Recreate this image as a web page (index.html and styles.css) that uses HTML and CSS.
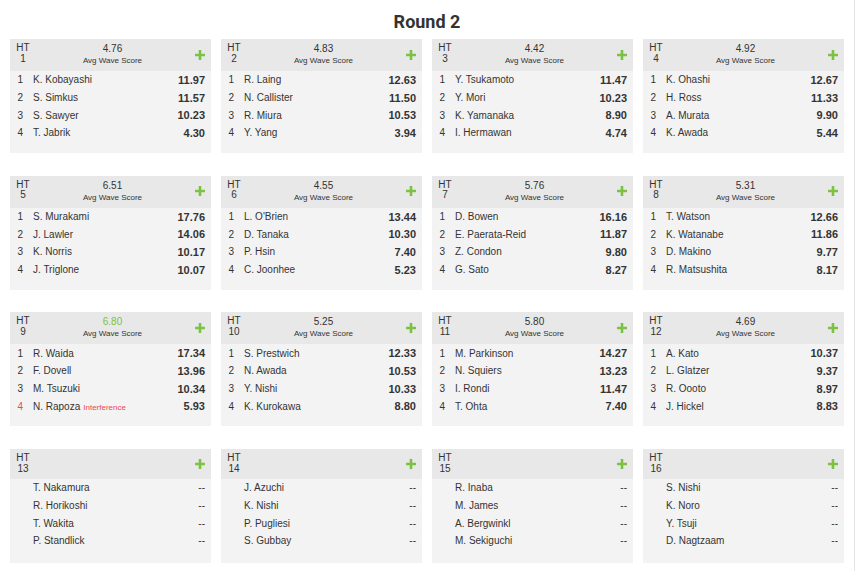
FILE: index.html
```html
<!DOCTYPE html>
<html>
<head>
<meta charset="utf-8">
<link rel="stylesheet" href="styles.css">
</head>
<body>
<div class="page">
  <h1 class="title">Round 2</h1>
  <div class="grid" id="grid"></div>
</div>
<script src="app.js"></script>
</body>
</html>
```

FILE: styles.css
```css
* { box-sizing: border-box; }
html, body { margin: 0; padding: 0; background: #fff; }
body { font-family: "Liberation Sans", Arial, sans-serif; color: #333; }
.page {
  width: 855px;
  height: 571px;
  border-right: 1px solid #e4e4e4;
}
.title {
  margin: 0 0 6px 0;
  padding-top: 11px;
  font-family: Roboto, "Liberation Sans", sans-serif;
  font-weight: 700;
  font-size: 18px;
  line-height: 22px;
  text-align: center;
  color: #333;
}
.grid {
  display: grid;
  grid-template-columns: repeat(4, 200.5px);
  column-gap: 10.5px;
  row-gap: 22.7px;
  padding-left: 10px;
}
.card {
  height: 114px;
  background: #f3f3f3;
}
.head {
  display: flex;
  align-items: center;
  background: #e8e8e8;
  padding: 4px 6px 5px 6px;
  min-height: 30px;
}
.ht {
  width: 14px;
  font-size: 10px;
  line-height: 10.5px;
  text-align: center;
  align-self: flex-start;
}
.avg {
  flex: 1;
  text-align: center;
}
.avg .val {
  font-size: 10px;
  line-height: 12px;
}
.avg .val.hi { color: #7cc242; }
.avg .lbl {
  font-size: 8px;
  line-height: 11px;
}
.plus {
  width: 10px;
  height: 10px;
  display: block;
  margin-right: -0.5px;
}
.row {
  display: flex;
  align-items: center;
  height: 17.7px;
  padding: 0 5.5px 0 6px;
  font-size: 10px;
}
.idx {
  width: 17px;
  padding-left: 1.5px;
}
.name { flex: 1; }
.score {
  font-weight: 700;
  font-size: 11px;
}
.score.dash { font-weight: 400; font-size: 10px; }
.red { color: #f0474b; }
.note {
  font-size: 8px;
  color: #f0474b;
  margin-left: 3px;
}
```

FILE: app.js
```js
const data = [
  {ht:1, avg:"4.76", rows:[["K. Kobayashi","11.97"],["S. Simkus","11.57"],["S. Sawyer","10.23"],["T. Jabrik","4.30"]]},
  {ht:2, avg:"4.83", rows:[["R. Laing","12.63"],["N. Callister","11.50"],["R. Miura","10.53"],["Y. Yang","3.94"]]},
  {ht:3, avg:"4.42", rows:[["Y. Tsukamoto","11.47"],["Y. Mori","10.23"],["K. Yamanaka","8.90"],["I. Hermawan","4.74"]]},
  {ht:4, avg:"4.92", rows:[["K. Ohashi","12.67"],["H. Ross","11.33"],["A. Murata","9.90"],["K. Awada","5.44"]]},
  {ht:5, avg:"6.51", rows:[["S. Murakami","17.76"],["J. Lawler","14.06"],["K. Norris","10.17"],["J. Triglone","10.07"]]},
  {ht:6, avg:"4.55", rows:[["L. O'Brien","13.44"],["D. Tanaka","10.30"],["P. Hsin","7.40"],["C. Joonhee","5.23"]]},
  {ht:7, avg:"5.76", rows:[["D. Bowen","16.16"],["E. Paerata-Reid","11.87"],["Z. Condon","9.80"],["G. Sato","8.27"]]},
  {ht:8, avg:"5.31", rows:[["T. Watson","12.66"],["K. Watanabe","11.86"],["D. Makino","9.77"],["R. Matsushita","8.17"]]},
  {ht:9, avg:"6.80", hi:true, rows:[["R. Waida","17.34"],["F. Dovell","13.96"],["M. Tsuzuki","10.34"],["N. Rapoza","5.93","Interference"]]},
  {ht:10, avg:"5.25", rows:[["S. Prestwich","12.33"],["N. Awada","10.53"],["Y. Nishi","10.33"],["K. Kurokawa","8.80"]]},
  {ht:11, avg:"5.80", rows:[["M. Parkinson","14.27"],["N. Squiers","13.23"],["I. Rondi","11.47"],["T. Ohta","7.40"]]},
  {ht:12, avg:"4.69", rows:[["A. Kato","10.37"],["L. Glatzer","9.37"],["R. Oooto","8.97"],["J. Hickel","8.83"]]},
  {ht:13, rows:[["T. Nakamura"],["R. Horikoshi"],["T. Wakita"],["P. Standlick"]]},
  {ht:14, rows:[["J. Azuchi"],["K. Nishi"],["P. Pugliesi"],["S. Gubbay"]]},
  {ht:15, rows:[["R. Inaba"],["M. James"],["A. Bergwinkl"],["M. Sekiguchi"]]},
  {ht:16, rows:[["S. Nishi"],["K. Noro"],["Y. Tsuji"],["D. Nagtzaam"]]}
];
const plus = '<svg class="plus" viewBox="0 0 10 10"><path d="M5 0V10M0 5H10" stroke="#7cc242" stroke-width="2.6" fill="none"/></svg>';
const grid = document.getElementById('grid');
let html = '';
for (const c of data) {
  html += '<div class="card"><div class="head"><div class="ht">HT<br>' + c.ht + '</div><div class="avg">';
  if (c.avg) html += '<div class="val' + (c.hi ? ' hi' : '') + '">' + c.avg + '</div><div class="lbl">Avg Wave Score</div>';
  html += '</div>' + plus + '</div>';
  c.rows.forEach((r, i) => {
    const has = r.length > 1;
    const red = r[2] ? ' red' : '';
    html += '<div class="row"><span class="idx' + red + '">' + (has ? (i + 1) : '') + '</span><span class="name">' + r[0] + (r[2] ? '<span class="note">' + r[2] + '</span>' : '') + '</span><span class="score' + (has ? '' : ' dash') + '">' + (has ? r[1] : '--') + '</span></div>';
  });
  html += '</div>';
}
grid.innerHTML = html;
```
